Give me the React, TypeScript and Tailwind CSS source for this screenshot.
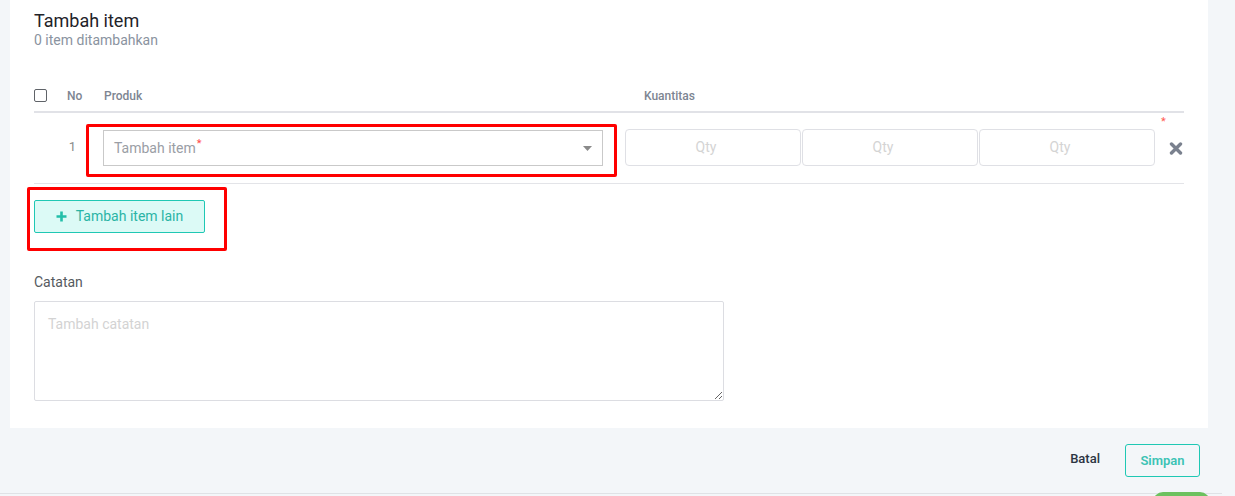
import React from "react";

function CaretDown() {
  return (
    <svg width="9" height="5" viewBox="0 0 9 5" className="shrink-0">
      <polygon points="0,0 9,0 4.5,5" fill="#8a8a8a" />
    </svg>
  );
}

function RemoveIcon() {
  return (
    <svg width="14" height="13" viewBox="0 0 14 13">
      <path
        d="M2.5 2 L11.5 11 M11.5 2 L2.5 11"
        stroke="#7a818e"
        strokeWidth="3.4"
        strokeLinecap="round"
      />
    </svg>
  );
}

function PlusIcon() {
  return (
    <svg width="11" height="11" viewBox="0 0 11 11">
      <path d="M5.5 0.5 V10.5 M0.5 5.5 H10.5" stroke="#22bfa9" strokeWidth="2.6" />
    </svg>
  );
}

const qtyFields = ["qty-1", "qty-2", "qty-3"];

export default function App() {
  return (
    <div className="relative h-[496px] w-full overflow-hidden bg-[#f3f6f9] font-['Roboto',sans-serif]">
      <div className="ml-[10px] w-[1198px] bg-white px-[24px] pt-[10px] pb-[27px]">
        <h1 className="text-[18px] leading-[22px] text-[#1f2329]">Tambah item</h1>
        <p className="text-[14px] leading-[17px] text-[#8a93a0]">0 item ditambahkan</p>

        {/* table header */}
        <div className="mt-[31px] flex h-[33px] items-center border-b-2 border-[#e1e2e7] text-[12px] font-medium text-[#7d8592]">
          <div className="w-[33px]">
            <span className="block h-[13px] w-[13px] rounded-[2px] border border-[#5f6368]" />
          </div>
          <div className="w-[37px]">No</div>
          <div className="w-[540px]">Produk</div>
          <div>Kuantitas</div>
        </div>

        {/* item row */}
        <div className="flex h-[71px] items-start border-b border-[#e3e4e8]">
          <div className="w-[33px]" />
          <div className="mt-[26px] w-[19px] pr-[10px] text-right text-[13px] leading-[16px] text-[#8a8a8a]">
            1
          </div>
          <div className="mt-[11px] h-[53px] w-[531px] rounded-[2px] border-[3px] border-[#ff0000] pt-[3px] pl-[14px]">
            <div className="flex h-[36px] w-[500px] items-center justify-between border border-[#c9c9c9] pr-[10px] pl-[10px]">
              <span className="text-[14px] text-[#9a9ea5]">
                Tambah item
                <sup className="ml-[1px] text-[11px] text-[#ff4b4b]">*</sup>
              </span>
              <CaretDown />
            </div>
          </div>
          <div className="mt-[16px] ml-[8px] flex gap-[1px]">
            {qtyFields.map((id) => (
              <div
                key={id}
                className="flex h-[37px] w-[176px] items-center justify-center rounded-[4px] border border-[#dfe0e5] pr-[14px] text-[14px] text-[#d4d4d4]"
              >
                Qty
              </div>
            ))}
          </div>
          <div className="relative h-full w-[29px]">
            <span className="absolute top-[3px] left-[6px] text-[11px] leading-[12px] text-[#ff5a4f]">*</span>
            <div className="mt-[29px] ml-[14px]">
              <RemoveIcon />
            </div>
          </div>
        </div>

        {/* add another item */}
        <div className="mt-[3px] -ml-[7px] h-[64px] w-[200px] rounded-[2px] border-[3px] border-[#ff0000] pt-[10px] pl-[4px]">
          <button className="flex h-[33px] w-[171px] items-center justify-center gap-[9px] rounded-[2px] border border-[#1fc8b4] bg-[#dcfaf6] text-[14px] text-[#2ab4a5]">
            <PlusIcon />
            Tambah item lain
          </button>
        </div>

        <div className="mt-[21px] text-[14px] leading-[20px] text-[#555a60]">Catatan</div>
        <textarea
          placeholder="Tambah catatan"
          className="mt-[9px] block h-[100px] w-[690px] rounded-[2px] border border-[#dcdde2] px-[13px] py-[12px] text-[14px] placeholder:text-[#d3d3d3] outline-none"
        />
      </div>

      {/* footer actions */}
      <div className="mt-[16px] flex items-center justify-end pr-[35px]">
        <span className="mr-[25px] mb-[4px] text-[13px] font-medium text-[#2c3443]">Batal</span>
        <button className="h-[33px] w-[75px] rounded-[3px] border border-[#1fc8b4] text-[13px] font-semibold text-[#3dc3b5]">
          Simpan
        </button>
      </div>

      <div className="mt-[16px] h-px w-[1222px] bg-[#dfe2e6]" />
      <div className="absolute top-[492px] left-[1153px] h-[20px] w-[57px] rounded-full bg-[#6cc15f]" />
    </div>
  );
}
